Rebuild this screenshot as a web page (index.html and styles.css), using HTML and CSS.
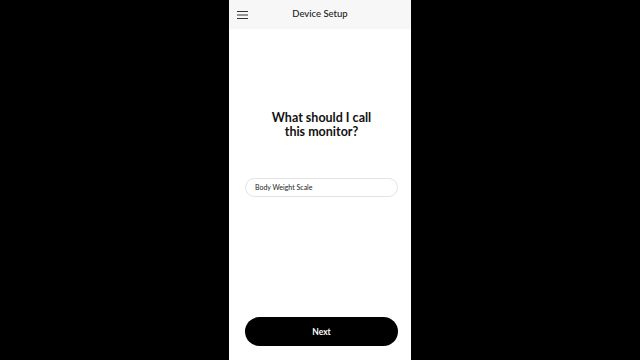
FILE: index.html
```html
<!DOCTYPE html>
<html lang="en">
<head>
    <meta charset="UTF-8">
    <meta name="viewport" content="width=device-width, initial-scale=1.0">
    <title>Device Setup</title>
    <link rel="stylesheet" href="styles.css">
</head>
<body>
    <div class="screen">
        <header class="topbar">
            <span class="menu-btn">
                <svg width="11" height="8" viewBox="0 0 11 8">
                    <path d="M0 0.5H11M0 4H11M0 7.5H11" stroke="#333" stroke-width="1"/>
                </svg>
            </span>
            <h1>Device Setup</h1>
        </header>
        <main class="content">
            <h2 class="question">What should I call<br>this monitor?</h2>
            <div class="field">
                <input type="text" value="Body Weight Scale">
            </div>
            <button type="button" class="next-btn">Next</button>
        </main>
    </div>
</body>
</html>
```

FILE: styles.css
```css
/* General Styles */
html, body {
    margin: 0;
    padding: 0;
    height: 100%;
}

body {
    background-color: #000;
    font-family: 'Lato', 'Liberation Sans', sans-serif;
    color: #111;
    display: flex;
    justify-content: center;
}

.screen {
    width: 182px;
    height: 360px;
    background-color: #ffffff;
    display: flex;
    flex-direction: column;
}

/* Header */
.topbar {
    position: relative;
    height: 27px;
    background-color: #f7f7f8;
    box-shadow: 0 1px 3px rgba(0, 0, 0, 0.08);
    display: flex;
    align-items: center;
    justify-content: center;
}

.menu-btn {
    position: absolute;
    left: 8px;
    top: 11px;
    line-height: 0;
}

.topbar h1 {
    margin: 0;
    font-size: 9.5px;
    font-weight: 500;
    color: #222;
}

/* Content */
.content {
    flex: 1;
    display: flex;
    flex-direction: column;
    align-items: center;
    padding: 0 13px 14px 16px;
}

.question {
    margin: 84px 0 0;
    font-size: 12.5px;
    line-height: 14px;
    font-weight: 700;
    text-align: center;
    color: #111;
}

.field {
    width: 100%;
    margin-top: 35px;
}

.field input {
    width: 100%;
    height: 19px;
    box-sizing: border-box;
    border: 1px solid #e2e2e6;
    border-radius: 10px;
    padding: 0 9px;
    font-family: inherit;
    font-size: 7px;
    color: #222;
    background: #fff;
    outline: none;
}

.next-btn {
    margin-top: auto;
    width: 100%;
    height: 29px;
    border: none;
    border-radius: 15px;
    background-color: #000;
    color: #fff;
    font-family: inherit;
    font-size: 8.5px;
    font-weight: 700;
    cursor: pointer;
}
```
